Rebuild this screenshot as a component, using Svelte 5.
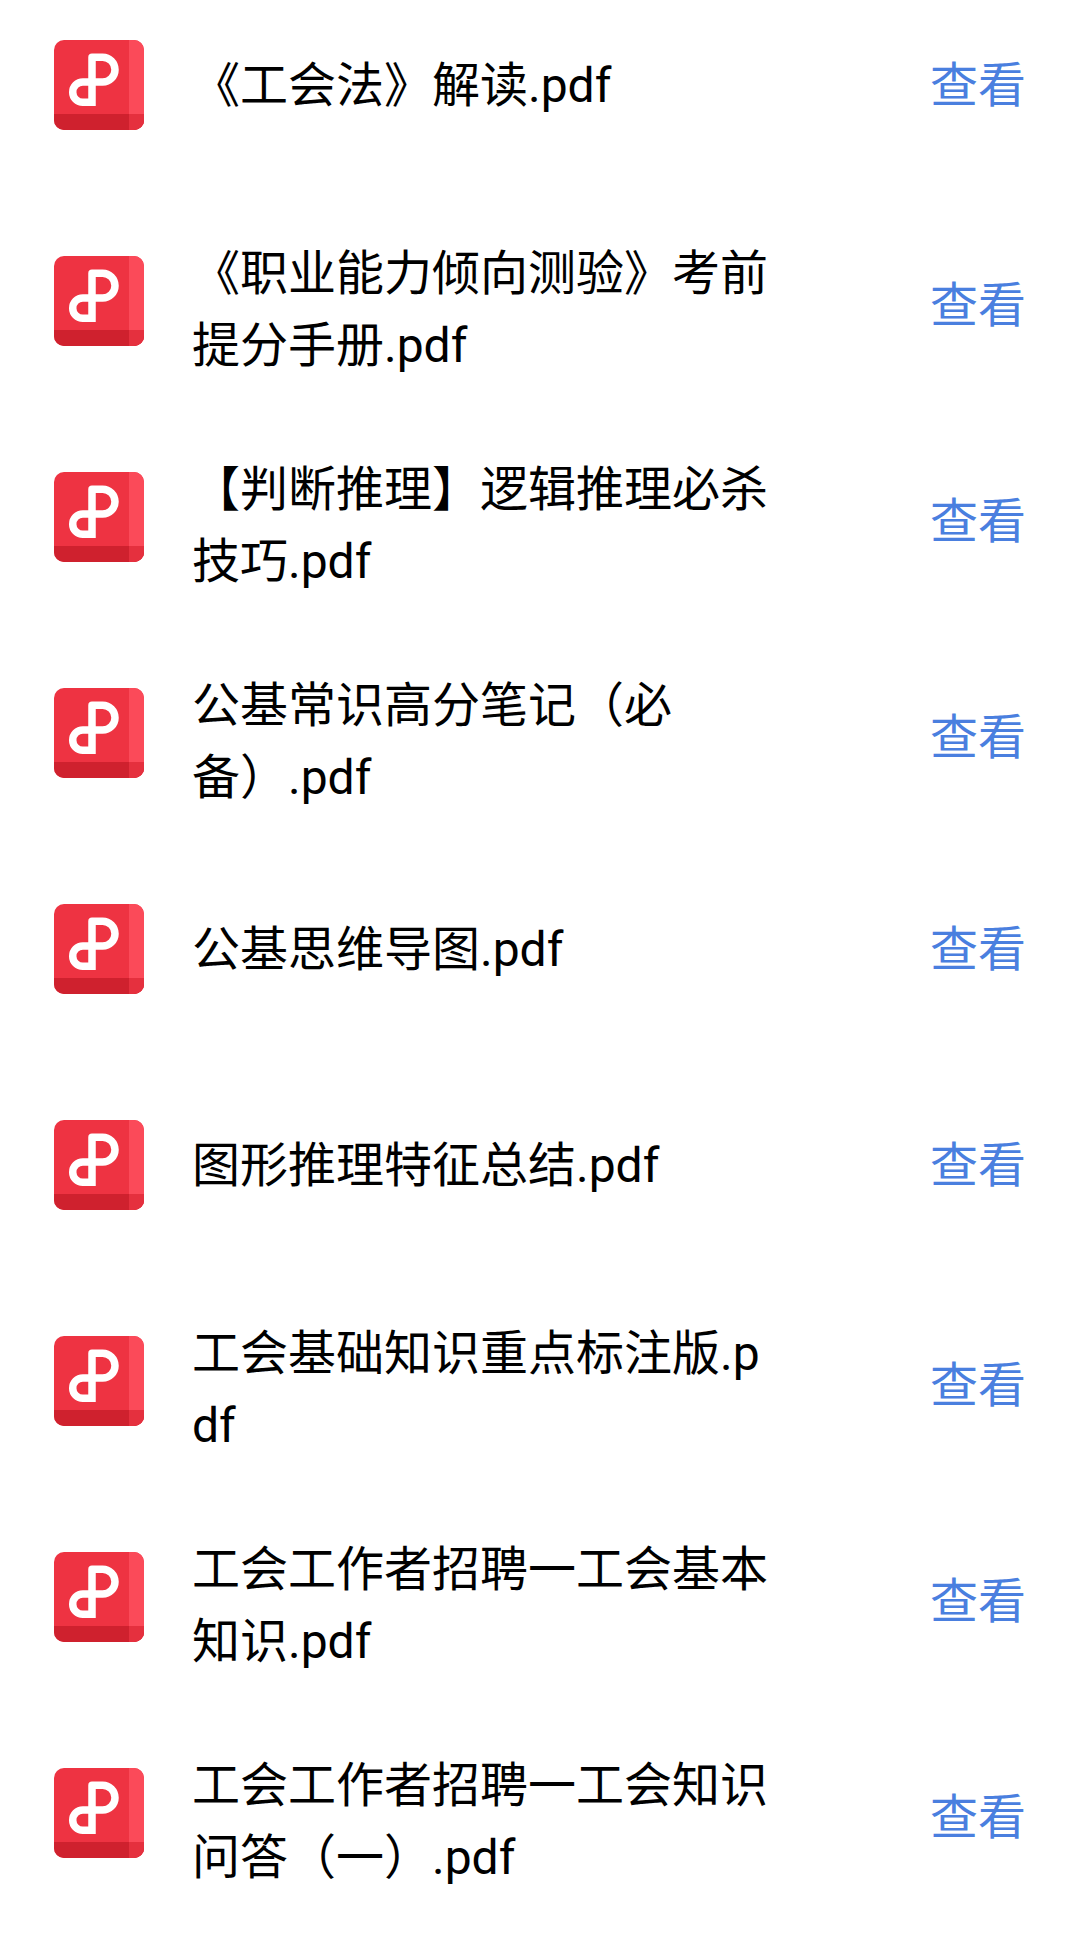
<script lang="ts">
  const files: string[][] = [
    ['《工会法》解读.pdf'],
    ['《职业能力倾向测验》考前', '提分手册.pdf'],
    ['【判断推理】逻辑推理必杀', '技巧.pdf'],
    ['公基常识高分笔记（必', '备）.pdf'],
    ['公基思维导图.pdf'],
    ['图形推理特征总结.pdf'],
    ['工会基础知识重点标注版.p', 'df'],
    ['工会工作者招聘一工会基本', '知识.pdf'],
    ['工会工作者招聘一工会知识', '问答（一）.pdf']
  ];
</script>

<ul class="list">
  {#each files as lines}
    <li class="row" class:two={lines.length > 1}>
      <svg class="icon" viewBox="0 0 90 90" aria-hidden="true">
        <defs>
          <clipPath id="round"><rect width="90" height="90" rx="10" /></clipPath>
        </defs>
        <g clip-path="url(#round)">
          <rect width="90" height="90" fill="#ee3342" />
          <rect x="75" width="15" height="90" fill="#fb4a59" />
          <rect y="74" width="90" height="16" fill="#cf212e" />
          <rect x="75" y="74" width="15" height="16" fill="#e5303e" />
        </g>
        <path
          d="M38 62.25V17.3H48.65a12.35 12.35 0 0 1 0 24.7H28.85a10.1 10.1 0 0 0 0 20.25H41.75"
          fill="none"
          stroke="#fff"
          stroke-width="7.5"
          stroke-linejoin="round"
        />
      </svg>
      <div class="name">
        {#each lines as line}<span>{line}</span>{/each}
      </div>
      <button class="view">查看</button>
    </li>
  {/each}
</ul>

<style>
  :global(body) {
    margin: 0;
    background: #fff;
  }

  .list {
    list-style: none;
    margin: 0;
    padding: 40px 54px 0;
    height: 1902px;
    overflow: hidden;
    font-family: Roboto, "Noto Sans CJK SC", sans-serif;
  }

  .row {
    display: flex;
    align-items: center;
    height: 90px;
    margin-bottom: 126px;
  }

  .icon {
    flex-shrink: 0;
    width: 90px;
    height: 90px;
  }

  .name {
    flex: 1;
    margin-left: 48px;
    margin-top: 2px;
    font-size: 48px;
    line-height: 72px;
    color: #000;
  }
  .name span {
    display: block;
    white-space: nowrap;
  }
  .row.two .name {
    margin-top: 17px;
  }

  .view {
    border: none;
    background: none;
    padding: 0;
    margin-top: 2px;
    font-family: inherit;
    font-size: 48px;
    line-height: 72px;
    color: #4a7fdf;
  }
  .row.two .view {
    margin-top: 10px;
  }
</style>
